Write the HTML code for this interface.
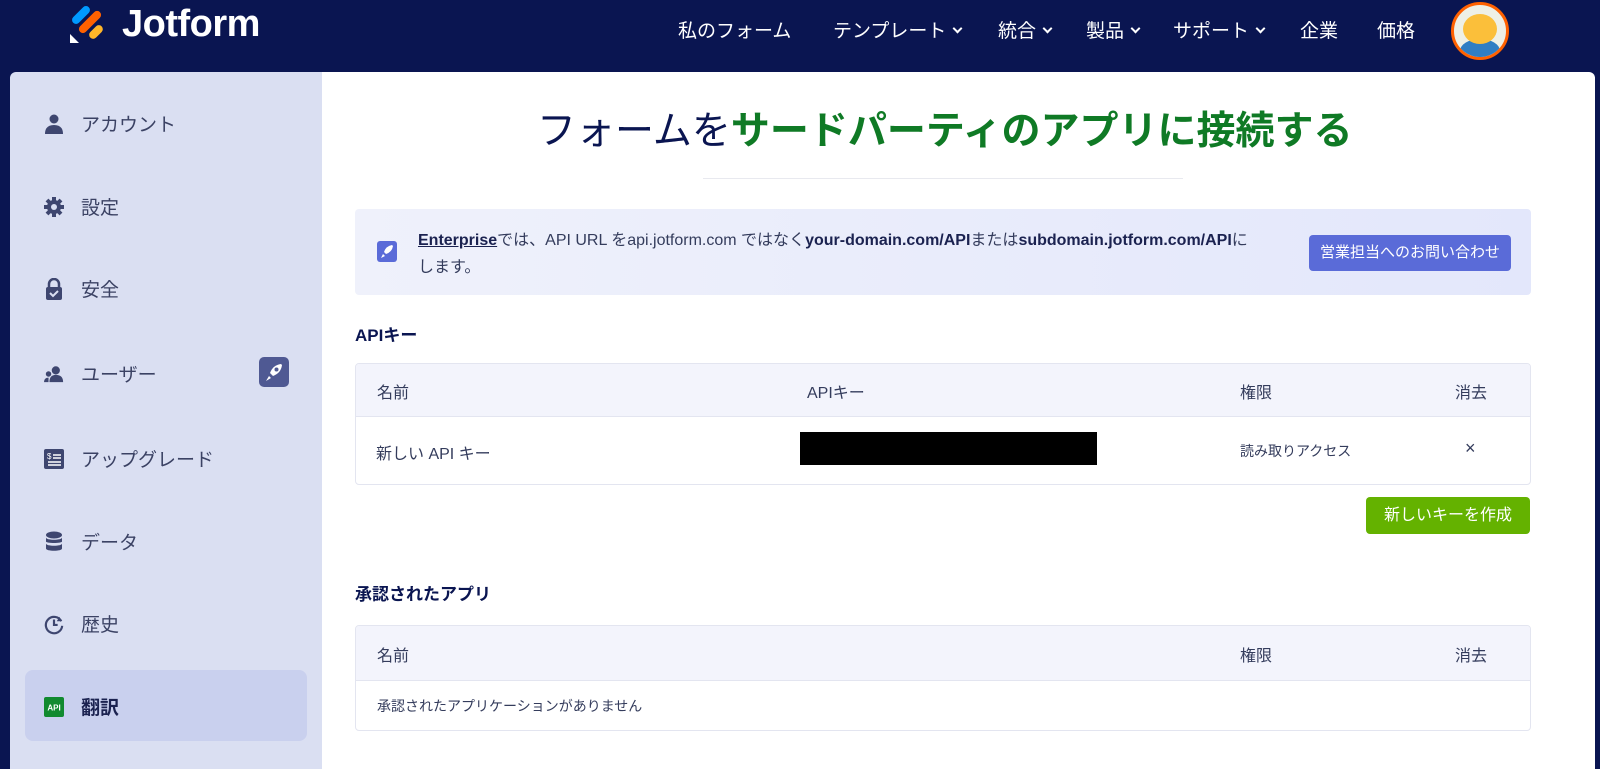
<!DOCTYPE html>
<html><head><meta charset="utf-8"><style>
*{box-sizing:border-box;margin:0;padding:0}
body{width:1600px;height:769px;overflow:hidden;background:#0a1551;font-family:"Liberation Sans","Noto Sans CJK JP",sans-serif;position:relative}
.abs{position:absolute}
.nav{color:#fff;font-size:19px;top:16px;white-space:nowrap}
.chev{display:inline-block;width:7px;height:7px;border-right:2px solid #fff;border-bottom:2px solid #fff;transform:rotate(45deg);margin-left:8px;position:relative;top:-5px}
.side{left:10px;top:72px;width:312px;height:697px;background:#dadff2;border-top-left-radius:6px}
.main{left:322px;top:72px;width:1273px;height:697px;background:#fff;border-top-right-radius:6px}
.item{position:absolute;left:44px;font-size:19px;color:#3b4264;display:flex;align-items:center}
.item .ic{width:20px;height:20px;margin-right:17px;display:flex;align-items:center;justify-content:center}
.th{font-size:16px;color:#343c5c}
</style></head><body>
<svg class="abs" style="left:68px;top:6px" width="40" height="40" viewBox="0 0 40 40">
<rect x="9" y="-2" width="8" height="22" rx="4" fill="#0099ff" transform="rotate(45 13 9)"/>
<rect x="18" y="2" width="8" height="28" rx="4" fill="#ff6100" transform="rotate(45 22 16)"/>
<rect x="24" y="18" width="8" height="16" rx="4" fill="#ffb629" transform="rotate(45 28 26)"/>
<path d="M2 28 L11 37 L2 37 Z" fill="#fff"/>
</svg>
<div class="abs" style="left:122px;top:3px;color:#fff;font-size:38px;font-weight:bold;letter-spacing:-0.5px">Jotform</div>
<div class="abs nav" style="left:678px">私のフォーム</div>
<div class="abs nav" style="left:833px">テンプレート<span class="chev"></span></div>
<div class="abs nav" style="left:998px">統合<span class="chev"></span></div>
<div class="abs nav" style="left:1086px">製品<span class="chev"></span></div>
<div class="abs nav" style="left:1173px">サポート<span class="chev"></span></div>
<div class="abs nav" style="left:1300px">企業</div>
<div class="abs nav" style="left:1377px">価格</div>
<div class="abs" style="left:1451px;top:2px;width:58px;height:58px;border-radius:50%;border:3px solid #ff6100;background:#eef0e6;overflow:hidden">
<div class="abs" style="left:6px;top:34px;width:40px;height:24px;border-radius:50% 50% 0 0;background:#2f7ec4"></div>
<div class="abs" style="left:9px;top:9px;width:34px;height:30px;border-radius:50%;background:#fbbf3a"></div>
</div>
<div class="abs side"></div>
<div class="abs main"></div>
<div class="abs" style="left:25px;top:670px;width:282px;height:71px;border-radius:8px;background:#c9d0ee"></div>

<div class="item" style="top:110px"><span class="ic"><svg width="18" height="20" viewBox="0 0 18 20"><circle cx="9" cy="5" r="4.5" fill="#3e4670"/><path d="M0 20 Q0 11 9 11 Q18 11 18 20Z" fill="#3e4670"/></svg></span>アカウント</div>
<div class="item" style="top:193px"><span class="ic"><svg width="20" height="20" viewBox="0 0 20 20"><circle cx="10" cy="10" r="7" fill="#3e4670"/><g stroke="#3e4670" stroke-width="4"><path d="M10 0v20M0 10h20M3 3l14 14M17 3L3 17"/></g><circle cx="10" cy="10" r="3" fill="#dadff2"/></svg></span>設定</div>
<div class="item" style="top:275px"><span class="ic"><svg width="18" height="22" viewBox="0 0 18 22"><path d="M4 9V6a5 5 0 0110 0v3" stroke="#3e4670" stroke-width="2.5" fill="none"/><rect x="1" y="9" width="16" height="13" rx="2" fill="#3e4670"/><path d="M5 15l3 3 5-5" stroke="#dadff2" stroke-width="2" fill="none"/></svg></span>安全</div>
<div class="item" style="top:360px"><span class="ic"><svg width="22" height="18" viewBox="0 0 22 18"><circle cx="13" cy="5" r="4.5" fill="#3e4670"/><path d="M6 18Q6 10 13 10Q21 10 21 18Z" fill="#3e4670"/><circle cx="5" cy="9" r="3" fill="#3e4670"/><path d="M0 18Q0 13 5 13L5 18Z" fill="#3e4670"/></svg></span>ユーザー</div>
<div class="abs" style="left:259px;top:357px;width:30px;height:30px;border-radius:5px;background:#4f5993"><svg width="30" height="30" viewBox="0 0 30 30"><path d="M22 7Q14 8 11 16L14 19Q22 16 23 8Z" fill="#fff"/><path d="M10 19l-3 5 5-3z" fill="#fff"/><circle cx="17.5" cy="12.5" r="2" fill="#4f5993"/></svg></div>
<div class="item" style="top:445px"><span class="ic"><svg width="20" height="20" viewBox="0 0 20 20"><rect width="20" height="20" rx="2" fill="#3e4670"/><text x="3" y="10" fill="#fff" font-size="8" font-family="Liberation Sans">$</text><path d="M9 6h8M9 9h8M4 13h13M4 16h13" stroke="#fff" stroke-width="1.5"/></svg></span>アップグレード</div>
<div class="item" style="top:528px"><span class="ic"><svg width="18" height="22" viewBox="0 0 18 22"><ellipse cx="9" cy="4" rx="8" ry="3.5" fill="#3e4670"/><path d="M1 6.5v4c0 2 16 2 16 0v-4c0 3-16 3-16 0zM1 12.5v5c0 3 16 3 16 0v-5c0 3-16 3-16 0z" fill="#3e4670"/></svg></span>データ</div>
<div class="item" style="top:610px"><span class="ic"><svg width="22" height="22" viewBox="0 0 22 22"><path d="M19 8A9 9 0 1 0 20 13" stroke="#3e4670" stroke-width="2.4" fill="none"/><path d="M17 3l2 5-5 0z" fill="#3e4670"/><path d="M11 6v6h4" stroke="#3e4670" stroke-width="2.4" fill="none"/></svg></span>歴史</div>
<div class="item" style="top:693px;font-weight:bold;color:#1b2250"><span class="ic"><svg width="20" height="20" viewBox="0 0 20 20"><rect width="20" height="20" rx="2" fill="#118a2f"/><text x="10" y="13.5" text-anchor="middle" fill="#fff" font-size="8" font-weight="bold" font-family="Liberation Sans">API</text></svg></span>翻訳</div>

<div class="abs" style="left:537px;top:100px;font-size:39px;color:#0a1551;white-space:nowrap">フォームを<span style="color:#0f7a25;font-weight:bold">サードパーティのアプリに接続する</span></div>
<div class="abs" style="left:703px;top:178px;width:480px;height:1px;background:#e8e9ef"></div>

<div class="abs" style="left:355px;top:209px;width:1176px;height:86px;border-radius:4px;background:linear-gradient(90deg,#eff1fb,#e3e7fb)"></div>
<div class="abs" style="left:377px;top:241px;width:20px;height:21px;border-radius:3px;background:#5a6bd8"><svg width="20" height="21" viewBox="0 0 20 21"><path d="M15 4Q9 5 7 11L9 13Q15 11 16 5Z" fill="#fff"/><path d="M6 13l-2 4 4-2z" fill="#fff"/></svg></div>
<div class="abs" style="left:418px;top:227px;width:900px;font-size:16px;line-height:27px;color:#343c5c;white-space:nowrap"><u style="font-weight:bold;color:#1b2250">Enterprise</u>では、API URL をapi.jotform.com ではなく<b style="color:#1b2250">your-domain.com/API</b>または<b style="color:#1b2250">subdomain.jotform.com/API</b>に<br>します。</div>
<div class="abs" style="left:1309px;top:235px;width:202px;height:36px;border-radius:4px;background:#5a6bd8;color:#fff;font-size:15px;line-height:36px;text-align:center">営業担当へのお問い合わせ</div>

<div class="abs" style="left:355px;top:321px;font-size:17px;font-weight:bold;color:#0a1551">APIキー</div>
<div class="abs" style="left:355px;top:363px;width:1176px;height:122px;border:1px solid #e3e5f0;border-radius:4px;overflow:hidden">
<div style="height:53px;background:#f3f4fc;border-bottom:1px solid #e3e5f0"></div></div>
<div class="abs th" style="left:377px;top:379px">名前</div>
<div class="abs th" style="left:807px;top:379px">APIキー</div>
<div class="abs th" style="left:1240px;top:379px">権限</div>
<div class="abs th" style="left:1455px;top:379px">消去</div>
<div class="abs th" style="left:376px;top:440px">新しい API キー</div>
<div class="abs" style="left:800px;top:432px;width:297px;height:33px;background:#000"></div>
<div class="abs" style="left:1240px;top:441px;font-size:14px;color:#343c5c">読み取りアクセス</div>
<div class="abs" style="left:1465px;top:438px;font-size:18px;color:#343c5c">×</div>
<div class="abs" style="left:1366px;top:497px;width:164px;height:37px;border-radius:4px;background:#64b200;color:#fff;font-size:16px;line-height:37px;text-align:center">新しいキーを作成</div>

<div class="abs" style="left:355px;top:580px;font-size:17px;font-weight:bold;color:#0a1551">承認されたアプリ</div>
<div class="abs" style="left:355px;top:625px;width:1176px;height:106px;border:1px solid #e3e5f0;border-radius:4px;overflow:hidden">
<div style="height:55px;background:#f3f4fc;border-bottom:1px solid #e3e5f0"></div></div>
<div class="abs th" style="left:377px;top:642px">名前</div>
<div class="abs th" style="left:1240px;top:642px">権限</div>
<div class="abs th" style="left:1455px;top:642px">消去</div>
<div class="abs" style="left:377px;top:696px;font-size:14px;color:#343c5c">承認されたアプリケーションがありません</div>
</body></html>
